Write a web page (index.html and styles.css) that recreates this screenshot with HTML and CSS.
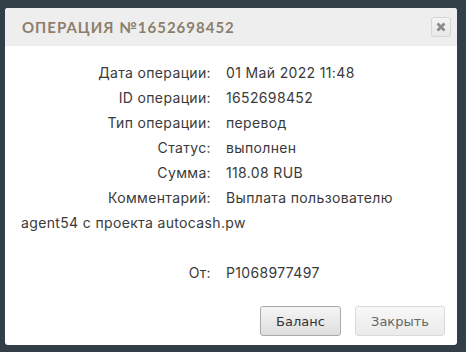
FILE: index.html
```
<!DOCTYPE html>
<html lang="ru">
<head>
<meta charset="utf-8">
<link rel="stylesheet" href="styles.css">
</head>
<body>
<div class="dialog">
  <div class="dialog-header">
    <span class="dialog-title">Операция №1652698452</span>
    <button class="close-btn" aria-label="Закрыть">
      <svg width="10" height="10" viewBox="0 0 10 10"><path d="M1.5 1.5 L8.5 8.5 M8.5 1.5 L1.5 8.5" stroke="#8a8a8a" stroke-width="2.6" stroke-linecap="butt"/></svg>
    </button>
  </div>
  <div class="dialog-body">
    <div class="info">
      <span class="label">Дата операции:</span><span class="value">01 Май 2022 11:48</span>
      <span class="label">ID операции:</span><span class="value">1652698452</span>
      <span class="label">Тип операции:</span><span class="value">перевод</span>
      <span class="label">Статус:</span><span class="value">выполнен</span>
      <span class="label">Сумма:</span><span class="value">118.08 RUB</span>
      <span class="label">Комментарий:</span><span class="value">Выплата пользователю</span>
    </div>
    <div class="wrap-line">agent54 с проекта autocash.pw</div>
    <div class="blank"></div>
    <div class="info">
      <span class="label">От:</span><span class="value">P1068977497</span>
    </div>
  </div>
  <div class="dialog-footer">
    <button class="btn btn-primary">Баланс</button>
    <button class="btn btn-muted">Закрыть</button>
  </div>
</div>
</body>
</html>
```
FILE: styles.css
```
html, body {
  margin: 0;
  padding: 0;
}
body {
  background: #323f47;
  width: 466px;
  height: 352px;
  padding: 8px 0 0 5px;
  box-sizing: border-box;
  font-family: "Inter", "Open Sans", sans-serif;
}
.dialog {
  width: 452px;
  height: 337px;
  background: #fff;
  border-radius: 3px;
  overflow: hidden;
  display: flex;
  flex-direction: column;
}
.dialog-header {
  height: 38px;
  background: #eeeeee;
  display: flex;
  align-items: center;
  justify-content: space-between;
  padding: 0 6px 0 17px;
}
.dialog-title {
  text-transform: uppercase;
  font-family: "Lato", sans-serif;
  font-size: 15px;
  letter-spacing: 1px;
  color: #8d7e6c;
  font-weight: 700;
}
.close-btn {
  width: 20px;
  height: 20px;
  padding: 0;
  border: 1px solid #d6d6d6;
  border-radius: 3px;
  background: linear-gradient(#f4f4f4, #e8e8e8);
  display: flex;
  align-items: center;
  justify-content: center;
}
.dialog-body {
  padding: 14px 16px 0 16px;
  font-size: 14px;
  letter-spacing: 0.35px;
  color: #3a3a3a;
  line-height: 25px;
}
.info {
  display: grid;
  grid-template-columns: 190px auto;
  column-gap: 15px;
}
.label {
  text-align: right;
}
.blank {
  height: 25px;
}
.dialog-footer {
  display: flex;
  justify-content: flex-end;
  gap: 14px;
  padding: 21px 12px 0 0;
}
.btn {
  font-family: "DejaVu Sans", "Verdana", sans-serif;
  font-size: 13px;
  height: 30px;
  border-radius: 3px;
  padding: 0 14px;
}
.btn-primary {
  width: 81px;
  color: #333;
  border: 1px solid #a9a9a9;
  background: linear-gradient(#f6f6f6, #dddddd);
}
.btn-muted {
  width: 90px;
  color: #666;
  border: 1px solid #dadada;
  background: linear-gradient(#f8f8f8, #ebebeb);
}
```
